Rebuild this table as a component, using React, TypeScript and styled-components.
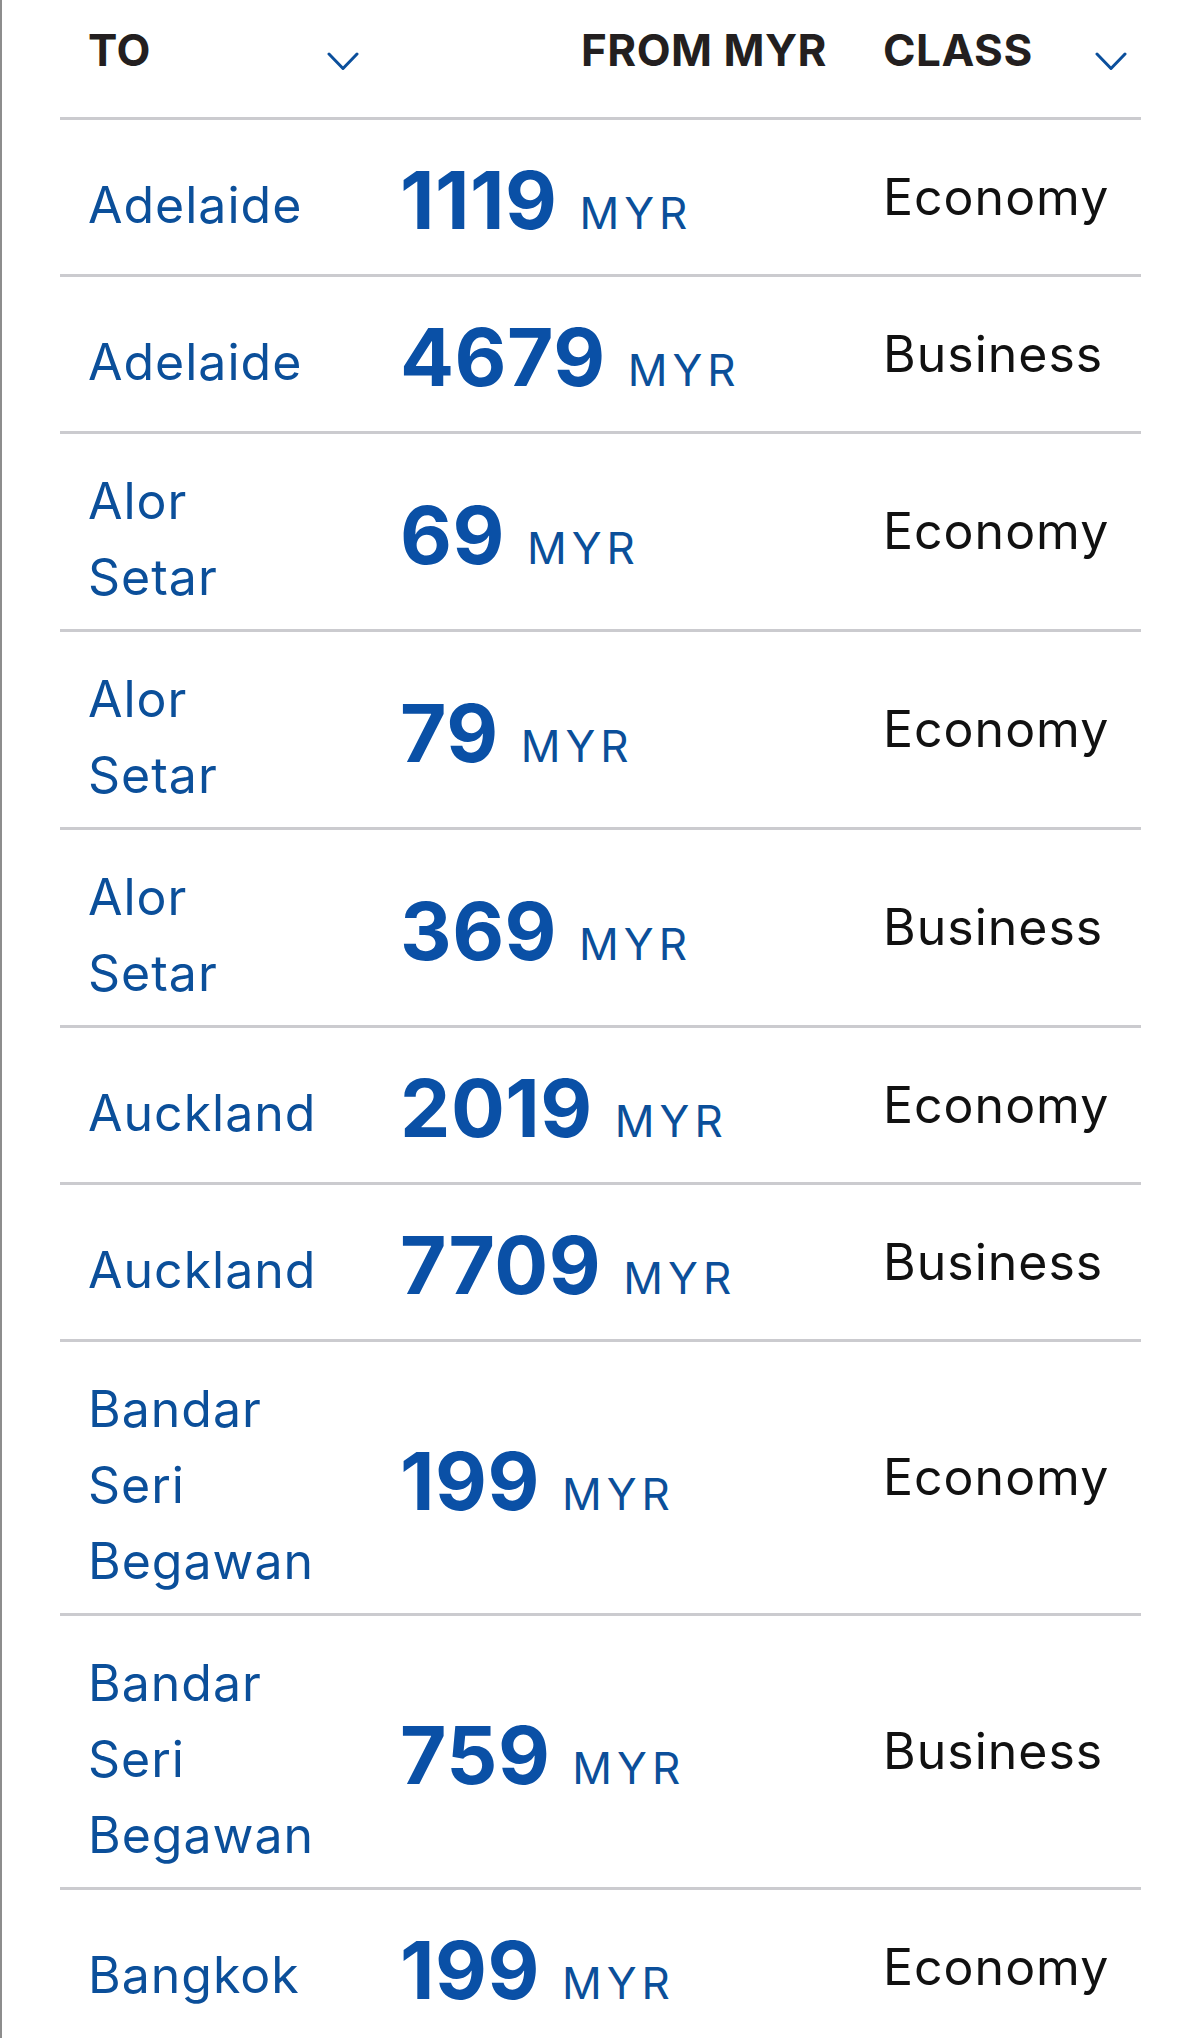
import React from "react";
import styled, { createGlobalStyle } from "styled-components";

type Fare = {
  city: string;
  price: number;
  cabin: "Economy" | "Business";
};

const fares: Fare[] = [
  { city: "Adelaide", price: 1119, cabin: "Economy" },
  { city: "Adelaide", price: 4679, cabin: "Business" },
  { city: "Alor Setar", price: 69, cabin: "Economy" },
  { city: "Alor Setar", price: 79, cabin: "Economy" },
  { city: "Alor Setar", price: 369, cabin: "Business" },
  { city: "Auckland", price: 2019, cabin: "Economy" },
  { city: "Auckland", price: 7709, cabin: "Business" },
  { city: "Bandar Seri Begawan", price: 199, cabin: "Economy" },
  { city: "Bandar Seri Begawan", price: 759, cabin: "Business" },
  { city: "Bangkok", price: 199, cabin: "Economy" },
];

const Chevron: React.FC = () => (
  <ChevronIcon viewBox="0 0 32 19" aria-hidden="true">
    <polyline points="2,2 16,16.5 30,2" />
  </ChevronIcon>
);

const App: React.FC = () => {
  return (
    <>
      <GlobalStyle />
      <Page>
        <FareTable>
          <HeaderRow>
            <HeadCell>
              <HeadLabel>TO</HeadLabel>
              <Chevron />
            </HeadCell>
            <HeadCell $align="end">
              <HeadLabel>FROM MYR</HeadLabel>
            </HeadCell>
            <HeadCell $tight>
              <HeadLabel>CLASS</HeadLabel>
              <Chevron />
            </HeadCell>
          </HeaderRow>
          {fares.map((fare, i) => (
            <FareRow key={i}>
              <CityCell>
                <CityLink href="#">{fare.city}</CityLink>
              </CityCell>
              <PriceCell>
                <Amount>{fare.price}</Amount>
                <Currency>MYR</Currency>
              </PriceCell>
              <CabinCell>{fare.cabin}</CabinCell>
            </FareRow>
          ))}
        </FareTable>
      </Page>
    </>
  );
};

// Styled Components
const GlobalStyle = createGlobalStyle`
  html, body {
    margin: 0;
    padding: 0;
    background: #fff;
  }
  body {
    font-family: Inter, "Open Sans", Arial, sans-serif;
    overflow: hidden;
  }
`;

const Page = styled.div`
  min-height: 2038px;
  border-left: 2px solid #8d8d8d;
  padding: 0 59px 0 58px;
  box-sizing: border-box;
`;

const FareTable = styled.div`
  display: flex;
  flex-direction: column;
`;

const columns = "327px 468px 286px";

const HeaderRow = styled.div`
  display: grid;
  grid-template-columns: ${columns};
  height: 117px;
  border-bottom: 3px solid #cbcbcf;
`;

const HeadCell = styled.div<{ $align?: "end"; $tight?: boolean }>`
  display: flex;
  align-items: flex-start;
  justify-content: ${(p) => (p.$align === "end" ? "flex-end" : "space-between")};
  padding: 24px ${(p) => (p.$tight ? "14px" : "28px")} 0 28px;
`;

const HeadLabel = styled.span`
  font-size: 44px;
  line-height: 53px;
  font-weight: 700;
  color: #231f20;
  letter-spacing: 0.5px;
`;

const ChevronIcon = styled.svg`
  width: 32px;
  height: 19px;
  margin-top: 28px;
  fill: none;
  stroke: #0b4f9c;
  stroke-width: 3;
  stroke-linecap: round;
  stroke-linejoin: round;
`;

const FareRow = styled.div`
  display: grid;
  grid-template-columns: ${columns};
  align-items: center;
  border-bottom: 3px solid #cbcbcf;
`;

const CityCell = styled.div`
  padding: 29px 0 14px 28px;
`;

const CityLink = styled.a`
  display: block;
  width: 232px;
  font-size: 50px;
  line-height: 76px;
  letter-spacing: 1px;
  color: #0b4f9a;
  text-decoration: none;
`;

const PriceCell = styled.div`
  padding: 24px 0 19px 13px;
  font-size: 80px;
  line-height: 111px;
  white-space: nowrap;
`;

const Amount = styled.span`
  font-weight: 700;
  color: #0a50a6;
  letter-spacing: 0.5px;
`;

const Currency = styled.span`
  margin-left: 22px;
  font-size: 44px;
  line-height: 1;
  color: #0b4f9a;
  letter-spacing: 5px;
`;

const CabinCell = styled.div`
  padding: 21px 0 22px 28px;
  font-size: 50px;
  line-height: 76px;
  letter-spacing: 1px;
  color: #111;
`;

export default App;
